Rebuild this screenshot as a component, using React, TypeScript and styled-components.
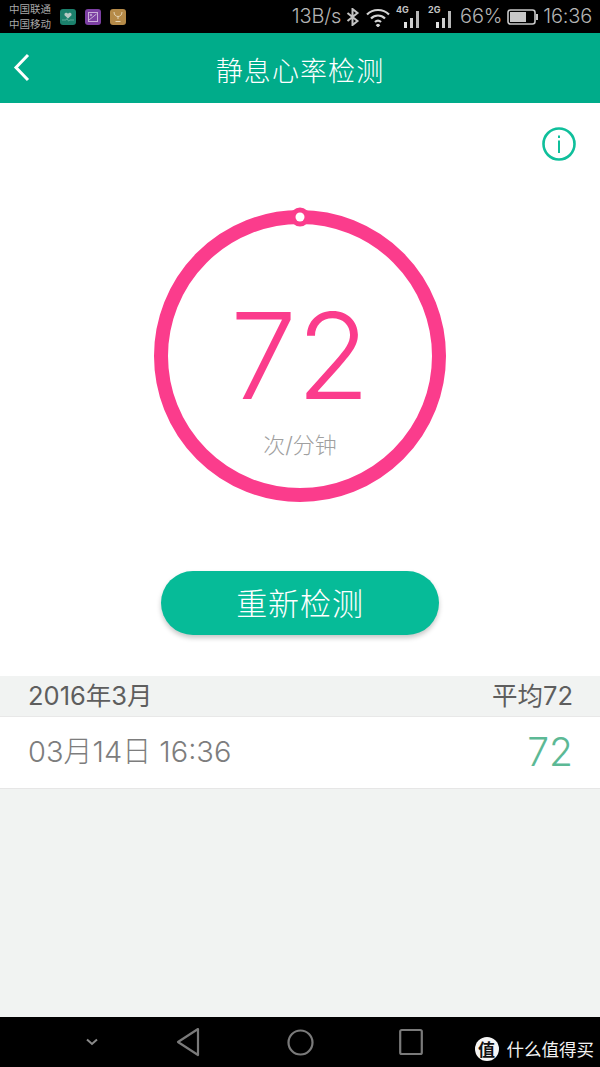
import React from 'react';
import styled, { createGlobalStyle } from 'styled-components';

const sans = `Inter, Roboto, 'Noto Sans CJK SC', sans-serif`;
const cjk = `'Noto Sans CJK SC', sans-serif`;

const GlobalStyle = createGlobalStyle`
  html, body { margin: 0; padding: 0; background: #f1f3f2; }
  * { box-sizing: border-box; }
`;

const Page = styled.div`
  display: flex;
  flex-direction: column;
  width: 600px;
  height: 1067px;
  overflow: hidden;
  background: #f1f3f2;
  font-family: ${sans};
`;

const StatusBar = styled.div`
  display: flex;
  align-items: center;
  flex: 0 0 33px;
  padding: 0 8px 0 9px;
  background: #000;
  color: #b4b4b4;
`;

const Carriers = styled.div`
  display: flex;
  flex-direction: column;
  width: 51px;
  margin-top: -2px;
  font-family: ${cjk};
  font-size: 10.5px;
  line-height: 15px;
  color: #a8a8a8;
`;

const AppIcons = styled.div`
  display: flex;
  gap: 9px;
`;

const AppIcon = styled.div<{ $bg: string }>`
  display: flex;
  align-items: center;
  justify-content: center;
  width: 16px;
  height: 16px;
  border-radius: 3px;
  background: ${p => p.$bg};
`;

const StatusRight = styled.div`
  display: flex;
  align-items: center;
  margin-left: auto;
  gap: 5px;
`;

const StatusText = styled.span`
  font-size: 20px;
  font-weight: 300;
  line-height: 33px;
  letter-spacing: -0.2px;
`;

const Header = styled.div`
  position: relative;
  display: flex;
  align-items: center;
  justify-content: center;
  flex: 0 0 70px;
  background: #00ac8a;
`;

const BackIcon = styled.svg`
  position: absolute;
  left: 13px;
  top: 20px;
`;

const Title = styled.h1`
  margin: 2px 0 0;
  font-family: ${cjk};
  font-size: 27px;
  font-weight: 300;
  letter-spacing: 1.1px;
  color: #fff;
`;

const Panel = styled.div`
  display: flex;
  flex-direction: column;
  align-items: center;
  flex: 0 0 573px;
  background: #fff;
`;

const InfoRow = styled.div`
  display: flex;
  justify-content: flex-end;
  align-self: stretch;
  height: 107px;
  padding: 24px 24px 0 0;
`;

const Gauge = styled.div`
  position: relative;
  display: flex;
  flex-direction: column;
  align-items: center;
  width: 292px;
  height: 292px;
`;

const GaugeRing = styled.svg`
  position: absolute;
  left: 0;
  top: 0;
  overflow: visible;
`;

const GaugeValue = styled.div`
  position: relative;
  margin-top: 76px;
  font-family: Inter, sans-serif;
  font-size: 119px;
  font-weight: 300;
  line-height: 140px;
  color: #fb3c8c;
`;

const GaugeUnit = styled.div`
  position: relative;
  margin-top: 4px;
  font-family: ${sans};
  font-size: 22px;
  font-weight: 300;
  line-height: 30px;
  color: #a0a0a0;
`;

const RetestButton = styled.button`
  display: flex;
  align-items: center;
  justify-content: center;
  width: 278px;
  height: 64px;
  margin-top: 69px;
  padding-bottom: 4px;
  border: 0;
  border-radius: 32px;
  background: #06bb98;
  box-shadow: 0 3px 5px rgba(0, 0, 0, 0.22);
  font-family: ${cjk};
  font-size: 31px;
  font-weight: 300;
  letter-spacing: 0.9px;
  color: #fff;
`;

const MonthRow = styled.div`
  display: flex;
  align-items: center;
  justify-content: space-between;
  flex: 0 0 41px;
  padding: 0 27px 1px 28px;
  border-bottom: 1px solid #e8e8e8;
  font-size: 25.5px;
  font-weight: 400;
  line-height: 30px;
  color: #5e5e5e;
`;

const RecordRow = styled.div`
  display: flex;
  align-items: center;
  justify-content: space-between;
  flex: 0 0 72px;
  padding: 0 27px 1px 28px;
  background: #fff;
  border-bottom: 1px solid #e6e6e6;
  line-height: 40px;
`;

const RecordDate = styled.span`
  font-size: 29px;
  font-weight: 300;
  color: #7d7d7d;
`;

const RecordValue = styled.span`
  font-size: 39px;
  font-weight: 300;
  color: #5cb995;
`;

const Spacer = styled.div`
  flex: 1;
`;

const NavBar = styled.div`
  position: relative;
  display: flex;
  align-items: center;
  flex: 0 0 50px;
  padding-left: 44px;
  background: #000;
`;

const NavCell = styled.div<{ $w: number }>`
  display: flex;
  justify-content: center;
  width: ${p => p.$w}px;
`;

const Watermark = styled.div`
  position: absolute;
  right: 6px;
  top: 20px;
  display: flex;
  align-items: center;
  gap: 8px;
  font-family: ${cjk};
  font-size: 17.5px;
  line-height: 24px;
  color: #f2f2f2;
`;

const WatermarkBadge = styled.span`
  display: flex;
  align-items: center;
  justify-content: center;
  width: 24px;
  height: 24px;
  border-radius: 50%;
  background: #f5f5f5;
  font-size: 17px;
  font-weight: 700;
  color: #111;
`;

function Signal({ label }: { label: string }): JSX.Element {
  return (
    <svg width="27" height="24" viewBox="0 0 27 24">
      <text x="0" y="8" fontSize="9" fontWeight="700" fontFamily="Inter, sans-serif" fill="#c4c4c4">
        {label}
      </text>
      <rect x="8" y="17" width="3" height="6" fill="#e2e2e2" />
      <rect x="14" y="13" width="3" height="10" fill="#d0d0d0" />
      <rect x="20" y="6" width="3" height="17" fill="#b8b8b8" />
    </svg>
  );
}

export default function App(): JSX.Element {
  return (
    <Page>
      <GlobalStyle />
      <StatusBar>
        <Carriers>
          <span>中国联通</span>
          <span>中国移动</span>
        </Carriers>
        <AppIcons>
          <AppIcon $bg="#1b806c">
            <svg width="12" height="12" viewBox="0 0 12 12">
              <path d="M6 7.5 2.5 4.2a1.8 1.8 0 0 1 3.5-1.2 1.8 1.8 0 0 1 3.5 1.2z" fill="#b5c9c4" />
              <path d="M0 9h4l1-1.5L6.5 10 8 9h4" stroke="#6fb5a5" strokeWidth="0.8" fill="none" />
            </svg>
          </AppIcon>
          <AppIcon $bg="#7c3fa3">
            <svg width="12" height="12" viewBox="0 0 12 12" fill="none" stroke="#c9afd8" strokeWidth="1">
              <rect x="1.5" y="1.5" width="9" height="9" />
              <path d="M2 9 9.5 3" />
              <circle cx="4" cy="4" r="0.8" />
            </svg>
          </AppIcon>
          <AppIcon $bg="#b58a48">
            <svg width="12" height="12" viewBox="0 0 12 12" fill="none" stroke="#e6d5b4" strokeWidth="1">
              <path d="M2 1c0 3 2 4.500 4 4.500S10 4 10 1" />
              <path d="M6 5.500V8M3.500 10.500h5" />
            </svg>
          </AppIcon>
        </AppIcons>
        <StatusRight>
          <StatusText>13B/s</StatusText>
          <svg width="14" height="18" viewBox="0 0 14 18" fill="none" stroke="#c4c4c4" strokeWidth="2">
            <path d="M1.500 5 11.500 13 6.500 17V1l5 4L1.500 13" />
          </svg>
          <svg width="26" height="20" viewBox="0 0 26 20" fill="none" stroke="#d4d4d4" strokeWidth="2.2">
            <path d="M2 7.500c6-6 16-6 22 0" />
            <path d="M6 11.500c4-4 10-4 14 0" />
            <path d="M10 15c2-2 4-2 6 0" />
            <path d="M11.500 17.500 13 19l1.500-1.500" />
          </svg>
          <Signal label="4G" />
          <Signal label="2G" />
          <StatusText>66%</StatusText>
          <svg width="31" height="18" viewBox="0 0 31 18">
            <rect x="1" y="2" width="27" height="14" rx="2.500" fill="none" stroke="#c8c8c8" strokeWidth="1.600" />
            <rect x="3" y="4" width="16" height="10" fill="#c8c8c8" />
            <rect x="29" y="6" width="2" height="6" fill="#c8c8c8" />
          </svg>
          <StatusText>16:36</StatusText>
        </StatusRight>
      </StatusBar>

      <Header>
        <BackIcon width="18" height="30" viewBox="0 0 18 30" fill="none" stroke="#fff" strokeWidth="3">
          <path d="M15 2 3 14.500 15 27" />
        </BackIcon>
        <Title>静息心率检测</Title>
      </Header>

      <Panel>
        <InfoRow>
          <svg width="34" height="34" viewBox="0 0 34 34" fill="none" stroke="#0fbf9b">
            <circle cx="17" cy="17" r="15.500" strokeWidth="2.600" />
            <path d="M17 13.500V26" strokeWidth="2" />
            <path d="M17 8.500v2.500" strokeWidth="2" />
          </svg>
        </InfoRow>
        <Gauge>
          <GaugeRing width="292" height="292" viewBox="0 0 292 292">
            <circle cx="146" cy="146" r="139" fill="none" stroke="#fb3c8c" strokeWidth="14" />
            <circle cx="146" cy="7" r="9.500" fill="#fb3c8c" />
            <circle cx="146" cy="7" r="4.500" fill="#fff" />
          </GaugeRing>
          <GaugeValue>72</GaugeValue>
          <GaugeUnit>次/分钟</GaugeUnit>
        </Gauge>
        <RetestButton>重新检测</RetestButton>
      </Panel>

      <MonthRow>
        <span>2016年3月</span>
        <span>平均72</span>
      </MonthRow>
      <RecordRow>
        <RecordDate>03月14日 16:36</RecordDate>
        <RecordValue>72</RecordValue>
      </RecordRow>
      <Spacer />

      <NavBar>
        <NavCell $w={96}>
          <svg width="14" height="8" viewBox="0 0 14 8" fill="none" stroke="#8a8a8a" strokeWidth="2">
            <path d="M2 1.500 7 6l5-4.500" />
          </svg>
        </NavCell>
        <NavCell $w={96}>
          <svg width="24" height="30" viewBox="0 0 24 30" fill="none" stroke="#7a7a7a" strokeWidth="2.200" strokeLinejoin="round">
            <path d="M22 2 2 15l20 13z" />
          </svg>
        </NavCell>
        <NavCell $w={128}>
          <svg width="27" height="27" viewBox="0 0 27 27" fill="none" stroke="#7a7a7a" strokeWidth="2.200">
            <circle cx="13.500" cy="13.500" r="12" />
          </svg>
        </NavCell>
        <NavCell $w={94}>
          <svg width="24" height="28" viewBox="0 0 24 28" fill="none" stroke="#7a7a7a" strokeWidth="2.200" strokeLinejoin="round">
            <rect x="1.200" y="2" width="21.600" height="24" rx="1.500" />
          </svg>
        </NavCell>
        <Watermark>
          <WatermarkBadge>值</WatermarkBadge>
          <span>什么值得买</span>
        </Watermark>
      </NavBar>
    </Page>
  );
}
